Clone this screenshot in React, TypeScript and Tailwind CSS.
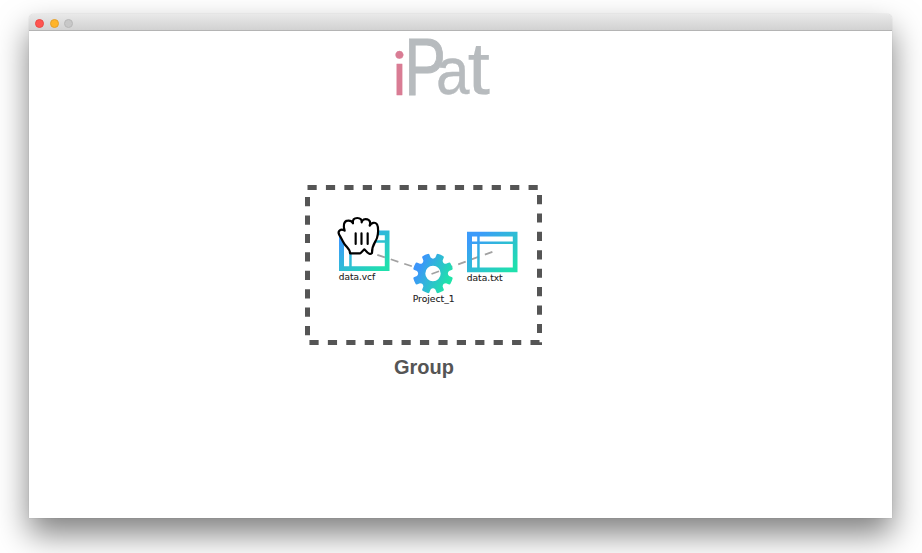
import React from "react";

const LABEL = '"DejaVu Sans", sans-serif';
const HELV = '"Liberation Sans", Arial, sans-serif';

function gearPath(outer: number, root: number) {
  const rad = Math.PI / 180;
  const p = (r: number, a: number) =>
    `${(r * Math.cos(a * rad)).toFixed(2)} ${(r * Math.sin(a * rad)).toFixed(2)}`;
  let d = "";
  for (let i = 0; i < 8; i++) {
    const a = 22.5 + i * 45;
    d += `${i === 0 ? "M" : "L"}${p(outer - 0.7, a - 11.5)} Q${p(outer + 0.2, a - 10)} ${p(outer, a - 7)} A${outer} ${outer} 0 0 1 ${p(outer, a + 7)} Q${p(outer + 0.2, a + 10)} ${p(outer - 0.7, a + 11.5)} L${p(root + 1.2, a + 14)} Q${p(root - 1.3, a + 22.5)} ${p(root + 1.2, a + 31)} `;
  }
  return d + "Z M7.7 0 A7.7 7.7 0 1 0 -7.7 0 A7.7 7.7 0 1 0 7.7 0 Z";
}

function TableIcon({ x, y }: { x: number; y: number }) {
  return (
    <path
      transform={`translate(${x} ${y})`}
      fill="url(#table)"
      fillRule="evenodd"
      d="M0 0H50.5V40.5H0Z M5 4.8V9.8H10.2V4.8Z M12.7 4.8V9.8H45.8V4.8Z M5 12.2V35.8H10.2V12.2Z M12.7 12.2V35.8H45.8V12.2Z"
    />
  );
}

function Logo() {
  return (
    <svg width="863" height="80" viewBox="29 31 863 80" className="block shrink-0">
      <text transform="translate(392.2 95)" fontFamily="Lato, sans-serif" fontSize="60" stroke="#d97c94" strokeWidth="0.3" fill="#d97c94">i</text>
      <g fontFamily={HELV} fill="#b7bbbe" stroke="#b7bbbe">
        <text transform="translate(404.3 94.5) scale(.77 1)" fontSize="81" strokeWidth="1">P</text>
        <text transform="translate(436 94) scale(.91 1)" fontSize="66" strokeWidth="0.4">a</text>
        <text transform="translate(467.6 94.2) scale(1.1 1)" fontSize="74" strokeWidth="0.1">t</text>
      </g>
    </svg>
  );
}

function Workspace() {
  return (
    <svg width="863" height="407" viewBox="29 111 863 407" className="block shrink-0">
      <defs>
        <linearGradient id="table" x1="0" y1="0" x2="1" y2="1">
          <stop offset="0.15" stopColor="#3c9bfa" />
          <stop offset="0.9" stopColor="#1fe0ad" />
        </linearGradient>
        <linearGradient id="gear" x1="0" y1="0.25" x2="1" y2="0.75">
          <stop offset="0.15" stopColor="#3c96fa" />
          <stop offset="0.9" stopColor="#1fe4a9" />
        </linearGradient>
      </defs>
      <path d="M307.5 187.5H539.5V342.5H307.5V188" fill="none" stroke="#555" strokeWidth="5" strokeDasharray="9.2 9.22" />
      <path d="M377.3 254.8L415 267.3" stroke="#a2a2a2" strokeWidth="1.8" strokeDasharray="8 6.2" fill="none" />
      <path d="M431.5 274L493 251.6" stroke="#a2a2a2" strokeWidth="1.8" strokeDasharray="8 6.2" fill="none" />
      <TableIcon x={339} y={230.5} />
      <TableIcon x={467} y={231.7} />
      <path transform="translate(433 273.5)" d={gearPath(20.2, 15)} fill="url(#gear)" fillRule="evenodd" />
      <g transform="translate(325 205) scale(.33333)" strokeLinecap="round" strokeLinejoin="round" stroke="#000">
        <path
          fill="#fff"
          strokeWidth="6.5"
          d="M75 145C76 133 66 128 59 118C50 105 49 98 43 90C36 77 48 70 59 77C54 62 56 48 68 47C76 46 81 49 84 55C82 44 87 39 97 39C107 39 111 45 110 52C112 43 119 41 127 43C135 46 137 53 134 62C139 53 150 50 156 58C161 67 160 87 156 99C152 111 140 120 141 144C137 148 131 147 128 143L118 133L108 143C106 146 105 145 101 145Z"
        />
        <path fill="none" strokeWidth="6.5" d="M92 85V117M109.5 85V117M128 85V117" />
      </g>
      <g fontFamily={LABEL} fontSize="9.2" fill="#222" stroke="#222" strokeWidth="0.1">
        <text x="338.7" y="279.5" textLength="36.5" lengthAdjust="spacingAndGlyphs">data.vcf</text>
        <text x="466.7" y="281" textLength="36" lengthAdjust="spacingAndGlyphs">data.txt</text>
        <text x="412.7" y="302" textLength="42" lengthAdjust="spacingAndGlyphs">Project_1</text>
      </g>
      <text x="394" y="374" fontFamily={HELV} fontWeight="700" fontSize="20" fill="#555" textLength="60" lengthAdjust="spacingAndGlyphs">Group</text>
    </svg>
  );
}

export default function App() {
  return (
    <div className="h-[553px] w-[922px] overflow-hidden bg-white pl-[29px] pt-[14px]">
      <div className="flex h-[504px] w-[863px] flex-col overflow-hidden rounded-t-[5px] bg-white shadow-[0_16px_32px_rgba(0,0,0,0.5),0_0_1px_rgba(0,0,0,0.3)]">
        <div className="flex h-[17px] shrink-0 items-center gap-[5.5px] border-b border-[#b4b4b4] bg-gradient-to-b from-[#e9e9e9] to-[#d2d2d2] pl-[6px] pt-[2px]">
          <span className="size-[9px] rounded-full border border-[#e94a46] bg-[#ff5450]" />
          <span className="size-[9px] rounded-full border border-[#e5a02c] bg-[#ffb429]" />
          <span className="size-[9px] rounded-full border border-[#b8b8b8] bg-[#c8c8c8]" />
        </div>
        <Logo />
        <Workspace />
      </div>
    </div>
  );
}
